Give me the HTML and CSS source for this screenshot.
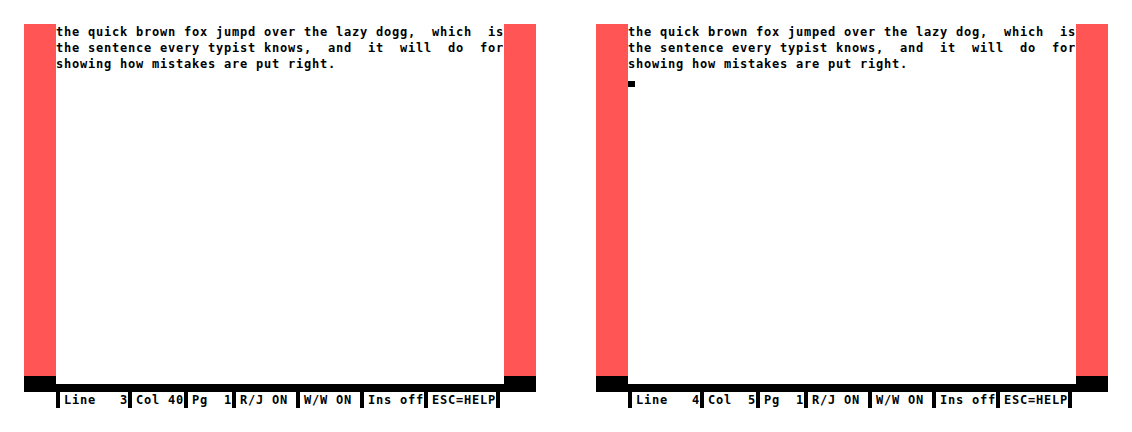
FILE: index.html
```html
<!DOCTYPE html>
<html>
<head>
<meta charset="utf-8">
<title>Word processor</title>
<link rel="stylesheet" href="styles.css">
</head>
<body>
<div class="stage">
  <div class="screen">
    <div class="frame">
      <div class="side"></div>
      <div class="page">
        <div class="line">the quick brown fox jumpd over the lazy dogg,  which  is</div>
        <div class="line">the sentence every typist knows,  and  it  will  do  for</div>
        <div class="line">showing how mistakes are put right.</div>
      </div>
      <div class="side"></div>
    </div>
    <div class="rule"></div>
    <div class="status"><span class="bar"></span>Line   3<span class="bar"></span>Col 40<span class="bar"></span>Pg  1<span class="bar"></span>R/J ON <span class="bar"></span>W/W ON <span class="bar"></span>Ins off<span class="bar"></span>ESC=HELP<span class="bar"></span></div>
  </div>
  <div class="screen">
    <div class="frame">
      <div class="side"></div>
      <div class="page">
        <div class="line">the quick brown fox jumped over the lazy dog,  which  is</div>
        <div class="line">the sentence every typist knows,  and  it  will  do  for</div>
        <div class="line">showing how mistakes are put right.</div>
        <div class="line"><span class="cursor"></span></div>
      </div>
      <div class="side"></div>
    </div>
    <div class="rule"></div>
    <div class="status"><span class="bar"></span>Line   4<span class="bar"></span>Col  5<span class="bar"></span>Pg  1<span class="bar"></span>R/J ON <span class="bar"></span>W/W ON <span class="bar"></span>Ins off<span class="bar"></span>ESC=HELP<span class="bar"></span></div>
  </div>
</div>
</body>
</html>
```
FILE: styles.css
```css
html, body {
  margin: 0;
  padding: 0;
  background: #ffffff;
}

.stage {
  display: flex;
  gap: 60px;
  padding: 24px 24px 0 24px;
}

.screen {
  width: 512px;
  display: flex;
  flex-direction: column;
}

.frame {
  display: flex;
  height: 360px;
}

.side {
  width: 32px;
  background: #ff5555;
  border-bottom: 8px solid #000000;
  box-sizing: border-box;
}

.page {
  width: 448px;
  background: #ffffff;
  font-family: "DejaVu Sans Mono", monospace;
  font-weight: bold;
  font-size: 12px;
  letter-spacing: 0.776px;
  color: #000000;
}

.line {
  height: 16px;
  line-height: 16px;
  white-space: pre;
  overflow: hidden;
}

.cursor {
  display: block;
  width: 7px;
  height: 6px;
  margin-top: 9px;
  background: #000000;
}

.rule {
  height: 8px;
  background: #000000;
}

.status {
  height: 16px;
  line-height: 16px;
  padding-left: 32px;
  white-space: pre;
  font-family: "DejaVu Sans Mono", monospace;
  font-weight: bold;
  font-size: 12px;
  letter-spacing: 0.776px;
  color: #000000;
}

.bar {
  display: inline-block;
  width: 8px;
  height: 16px;
  vertical-align: top;
  letter-spacing: 0;
}

.bar::before {
  content: "";
  display: block;
  width: 4px;
  height: 16px;
  background: #000000;
}
```
